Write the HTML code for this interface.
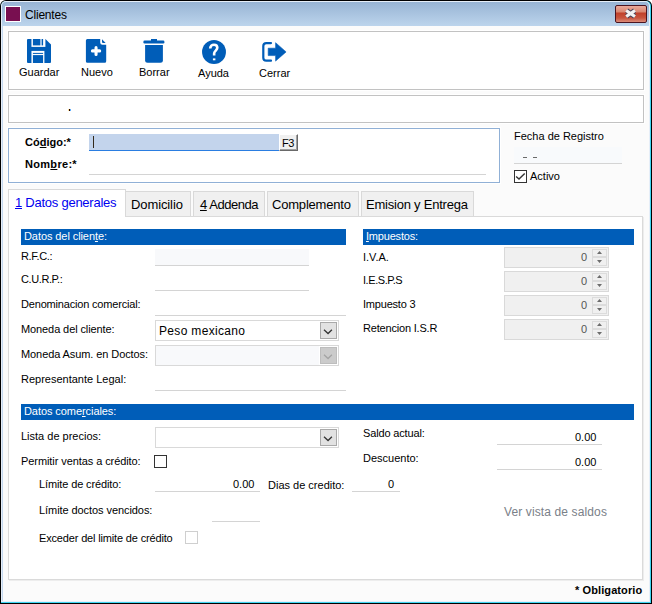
<!DOCTYPE html>
<html><head><meta charset="utf-8">
<style>
html,body{margin:0;padding:0;}
body{width:652px;height:604px;position:relative;overflow:hidden;background:#fff;font-family:"Liberation Sans",sans-serif;}
.a{position:absolute;box-sizing:border-box;}
.t{position:absolute;font-size:11px;line-height:15px;white-space:nowrap;color:#000;}
.t12{font-size:12px;line-height:16px;}
.t13{font-size:13px;line-height:17px;}
.b{font-weight:bold;}
.u{text-decoration:underline;}
.box{position:absolute;box-sizing:border-box;border:1px solid #c2c2c2;background:#fff;box-shadow:0 0 0 1px #fff;}
.ul{position:absolute;height:1px;background:#d4d4d4;}
.tab{position:absolute;box-sizing:border-box;border:1px solid #d9d9d9;border-bottom:none;background:#f0f0f0;}
.hdr{position:absolute;background:#005db8;height:16px;}
.spin{position:absolute;box-sizing:border-box;width:105px;height:21px;border:1px solid #d9d9d9;background:#f0f0f0;}
.sbtn{position:absolute;box-sizing:border-box;left:87px;width:15px;height:9px;border:1px solid #dcdcdc;background:#f0f0f0;}
</style></head><body>

<!-- window frame -->
<div class="a" style="left:0;top:0;width:652px;height:604px;background:#000;border-radius:6px 6px 0 0;"></div>
<div class="a" style="left:1px;top:1px;width:650px;height:602px;background:#3fd6f2;border-radius:5px 5px 0 0;"></div>
<div class="a" style="left:1px;top:1px;width:649px;height:601px;background:#e6eef8;border-radius:5px 5px 0 0;"></div>
<div class="a" style="left:2px;top:2px;width:647px;height:599px;background:linear-gradient(#98b4d4,#bcd4ec 24px,#c4d8ef 24px);border-radius:4px 4px 0 0;"></div>
<div class="a" style="left:3px;top:26px;width:646px;height:575px;background:#fbfbfb;"></div>

<!-- title -->
<div class="a" style="left:5px;top:6px;width:16px;height:16px;background:#fff;"></div>
<div class="a" style="left:6px;top:7px;width:14px;height:14px;background:#780f50;"></div>
<div class="t t12" style="left:25px;top:7px;color:#000;letter-spacing:-0.2px;">Clientes</div>

<!-- close button -->
<div class="a" style="left:615px;top:5px;width:32px;height:18px;border:1px solid #4a1420;border-radius:2px;background:linear-gradient(#eaa99a,#d98670 6px,#c0402a 7px,#c8553e 12px,#dc8c7a);"></div>
<svg class="a" style="left:615px;top:5px" width="32" height="18" viewBox="0 0 32 18">
<path d="M11.6,5.6 L19.6,11.4 M19.6,5.6 L11.6,11.4" stroke="#4a4458" stroke-width="5" stroke-linecap="butt"/>
<path d="M11.2,5.5 L20,11.5 M20,5.5 L11.2,11.5" stroke="#f2f2f2" stroke-width="3.2" stroke-linecap="butt"/>
</svg>

<!-- toolbar box -->
<div class="box" style="left:8px;top:31px;width:636px;height:59px;"></div>
<svg class="a" style="left:27px;top:39px" width="24" height="24" viewBox="0 0 24 24">
<path d="M1,0 H18.4 L24,5.6 V23 Q24,24 23,24 H1 Q0,24 0,23 V1 Q0,0 1,0Z" fill="#005db8"/>
<rect x="4.45" y="0" width="13.95" height="7.9" fill="#fff"/>
<rect x="5.9" y="0" width="7.5" height="6.4" fill="#005db8"/>
<rect x="14.6" y="0" width="1.5" height="6.4" fill="#005db8"/>
<rect x="4.45" y="11.9" width="12.95" height="12.1" fill="#fff"/>
<rect x="5.9" y="13.9" width="10.2" height="1" fill="#005db8"/>
<rect x="5.9" y="16.1" width="10.2" height="7.9" fill="#005db8"/>
</svg>
<svg class="a" style="left:82px;top:36px" width="28" height="30" viewBox="0 0 28 30">
<path d="M5.4,3 H18.2 V6.4 Q18.2,8.7 20.5,8.7 H24.2 V25.3 Q24.2,26.8 22.7,26.8 H5.4 Q3.9,26.8 3.9,25.3 V4.5 Q3.9,3 5.4,3Z" fill="#005db8"/>
<path d="M20,3.3 L23.65,6.9 H21 Q20,6.9 20,5.9Z" fill="#005db8"/>
<path d="M10.45,14.9 H17.65 M14.05,11.65 V18.55" stroke="#fff" stroke-width="3.1" stroke-linecap="round"/>
</svg>
<svg class="a" style="left:140px;top:36px" width="28" height="30" viewBox="0 0 28 30">
<rect x="11" y="3" width="6" height="2.5" fill="#005db8"/>
<rect x="3.4" y="4.5" width="21" height="2.9" rx="1.2" fill="#005db8"/>
<path d="M5.1,8.9 H22.9 V24.3 Q22.9,26.8 20.4,26.8 H7.6 Q5.1,26.8 5.1,24.3Z" fill="#005db8"/>
</svg>
<svg class="a" style="left:202px;top:40px" width="24" height="24" viewBox="0 0 24 24">
<circle cx="12" cy="12" r="11.95" fill="#005db8"/>
<path d="M8.2,8.5 C8.2,6 9.9,4.8 12,4.8 C14,4.8 15.3,6.2 15.3,7.8 C15.3,10.4 12.15,10.9 12.15,13.6 V15.6" stroke="#fff" stroke-width="2.6" fill="none"/>
<rect x="10.9" y="18.4" width="2.5" height="1.9" fill="#fff"/>
</svg>
<svg class="a" style="left:262px;top:40px" width="25" height="24" viewBox="0 0 25 24">
<path d="M9,3.1 H4.3 Q1.3,3.1 1.3,6.1 V17.7 Q1.3,20.7 4.3,20.7 H9" stroke="#005db8" stroke-width="2.2" fill="none" stroke-linecap="round"/>
<path d="M6.2,8.2 H13.6 V2.7 L24.07,11.9 L13.6,21.1 V15.6 H6.2Z" fill="#005db8" stroke="#005db8" stroke-width="0.6" stroke-linejoin="round"/>
</svg>
<div class="t" style="left:19px;top:65px;">Guardar</div>
<div class="t" style="left:81px;top:65px;">Nuevo</div>
<div class="t" style="left:139px;top:65px;">Borrar</div>
<div class="t" style="left:198px;top:66px;">Ayuda</div>
<div class="t" style="left:259px;top:66px;">Cerrar</div>

<!-- box 2 -->
<div class="box" style="left:8px;top:95px;width:636px;height:28px;"></div>
<div class="a" style="left:68px;top:109px;width:1px;height:2px;background:#ffe090;"></div><div class="a" style="left:69px;top:109px;width:1px;height:2px;background:#200000;"></div><div class="a" style="left:70px;top:109px;width:1px;height:2px;background:#60b0ff;"></div>

<!-- codigo/nombre box -->
<div class="box" style="left:8px;top:128px;width:492px;height:55px;border-color:#90b0d6;"></div>
<div class="t b" style="left:25px;top:135px;">C<span>ó</span><span class="u">d</span>igo:*</div>
<div class="t b" style="left:25px;top:157px;letter-spacing:0.3px;">Nom<span class="u">b</span>re:*</div>
<div class="a" style="left:89px;top:134px;width:190px;height:16px;background:#c3d4ec;"></div>
<div class="a" style="left:89px;top:150px;width:190px;height:1px;background:#2a7de1;"></div>
<div class="a" style="left:93px;top:136px;width:1px;height:12px;background:#33291a;"></div>
<div class="a" style="left:279px;top:134px;width:19px;height:17px;background:#f0f0f0;border-left:1px solid #fff;border-top:1px solid #fff;box-shadow:inset -1px -1px 0 #a0a0a0;border-right:1px solid #696969;border-bottom:1px solid #696969;"></div>
<div class="t" style="left:282px;top:136px;letter-spacing:-0.4px;">F3</div>
<div class="ul" style="left:89px;top:174px;width:397px;"></div>

<div class="t" style="left:514px;top:129px;">Fecha de Registro</div>
<div class="a" style="left:514px;top:147px;width:108px;height:16px;background:#f8fafc;"></div>
<div class="ul" style="left:514px;top:163px;width:108px;"></div>
<div class="a" style="left:523px;top:157px;width:4px;height:1px;background:#6a6a6a;"></div><div class="a" style="left:533px;top:157px;width:4px;height:1px;background:#6a6a6a;"></div>
<div class="a" style="left:514px;top:170px;width:13px;height:13px;border:1px solid #333;background:#fff;"></div>
<svg class="a" style="left:514px;top:170px" width="13" height="13" viewBox="0 0 13 13">
<path d="M2.1,6.5 L5,9.1 L10.7,3.4" stroke="#333" stroke-width="1.4" fill="none"/>
</svg>
<div class="t" style="left:530px;top:169px;">Activo</div>

<!-- tabs -->
<div class="box" style="left:8px;top:216px;width:635px;height:364px;border-color:#dadada;box-shadow:1px 1px 0 #ededed;"></div>
<div class="tab" style="left:125px;top:191px;width:66px;height:25px;"></div>
<div class="tab" style="left:193px;top:191px;width:72px;height:25px;"></div>
<div class="tab" style="left:267px;top:191px;width:92px;height:25px;"></div>
<div class="tab" style="left:361px;top:191px;width:113px;height:25px;"></div>
<div class="tab" style="left:8px;top:189px;width:118px;height:28px;background:#fff;"></div>
<div class="t t13" style="left:15px;top:194px;color:#0000f0;letter-spacing:-0.25px;"><span class="u">1</span> Datos generales</div>
<div class="t t13" style="left:131px;top:196px;letter-spacing:-0.1px;">Domicilio</div>
<div class="t t13" style="left:200px;top:196px;letter-spacing:-0.45px;"><span class="u">4</span> Addenda</div>
<div class="t t13" style="left:272px;top:196px;letter-spacing:-0.2px;">Complemento</div>
<div class="t t13" style="left:366px;top:196px;letter-spacing:-0.22px;">Emision y Entrega</div>

<!-- headers -->
<div class="hdr" style="left:21px;top:229px;width:325px;"></div>
<div class="hdr" style="left:363px;top:229px;width:271px;"></div>
<div class="hdr" style="left:21px;top:404px;width:613px;"></div>
<div class="t" style="left:24px;top:229px;color:#fff;letter-spacing:-0.08px;">Datos del clien<span class="u">t</span>e:</div>
<div class="t" style="left:366px;top:229px;color:#fff;letter-spacing:-0.2px;"><span class="u">I</span>mpuestos:</div>
<div class="t" style="left:24px;top:404px;color:#fff;letter-spacing:-0.07px;">Datos come<span class="u">r</span>ciales:</div>

<!-- left column -->
<div class="t" style="left:21px;top:249px;letter-spacing:-0.33px;">R.F.C.:</div>
<div class="t" style="left:21px;top:272px;letter-spacing:-0.4px;">C.U.R.P.:</div>
<div class="t" style="left:21px;top:297px;letter-spacing:-0.18px;">Denominacion comercial:</div>
<div class="t" style="left:21px;top:322px;letter-spacing:-0.1px;">Moneda del cliente:</div>
<div class="t" style="left:21px;top:347px;letter-spacing:-0.09px;">Moneda Asum. en Doctos:</div>
<div class="t" style="left:21px;top:372px;">Representante Legal:</div>

<div class="a" style="left:155px;top:249px;width:154px;height:16px;background:#f8f9fb;"></div>
<div class="ul" style="left:155px;top:265px;width:154px;"></div>
<div class="ul" style="left:155px;top:290px;width:154px;"></div>
<div class="ul" style="left:155px;top:315px;width:191px;"></div>
<div class="a" style="left:155px;top:320px;width:184px;height:21px;border:1px solid #d9d9d9;background:#fff;"></div>
<div class="a" style="left:320px;top:322px;width:17px;height:17px;border:1px solid #a9a9a9;background:#e2e2e2;"></div>
<svg class="a" style="left:320px;top:322px" width="17" height="17" viewBox="0 0 17 17"><path d="M4,7.8 L8.05,11.5 L11.9,7.8" stroke="#333" stroke-width="1.3" fill="none"/></svg>
<div class="t t12" style="left:159px;top:323px;letter-spacing:0.33px;">Peso mexicano</div>
<div class="a" style="left:155px;top:345px;width:184px;height:21px;border:1px solid #d9d9d9;background:#f8f9fb;"></div>
<div class="a" style="left:319px;top:346px;width:19px;height:19px;background:#fff;"></div><div class="a" style="left:320px;top:347px;width:17px;height:17px;background:#cbcbcb;border:1px solid #bdbdbd;"></div>
<svg class="a" style="left:320px;top:347px" width="17" height="17" viewBox="0 0 17 17"><path d="M4,7.8 L8.05,11.5 L11.9,7.8" stroke="#a4a4a4" stroke-width="1.3" fill="none"/></svg>
<div class="ul" style="left:155px;top:390px;width:191px;"></div>

<!-- right column -->
<div class="t" style="left:363px;top:250px;">I.V.A.</div>
<div class="t" style="left:363px;top:273px;letter-spacing:-0.44px;">I.E.S.P.S</div>
<div class="t" style="left:363px;top:297px;letter-spacing:-0.2px;">Impuesto 3</div>
<div class="t" style="left:363px;top:321px;letter-spacing:-0.19px;">Retencion I.S.R</div>

<div class="spin" style="left:504px;top:247px;"><div class="sbtn" style="top:1px;height:8px"></div><div class="sbtn" style="top:9px"></div></div>
<div class="spin" style="left:504px;top:271px;"><div class="sbtn" style="top:1px;height:8px"></div><div class="sbtn" style="top:9px"></div></div>
<div class="spin" style="left:504px;top:295px;"><div class="sbtn" style="top:1px;height:8px"></div><div class="sbtn" style="top:9px"></div></div>
<div class="spin" style="left:504px;top:319px;"><div class="sbtn" style="top:1px;height:8px"></div><div class="sbtn" style="top:9px"></div></div>
<svg class="a" style="left:504px;top:247px" width="105" height="93" viewBox="0 0 105 93">
<g fill="#6d6d6d">
<path d="M93,7 h5 l-2.5,-3z M93,13 h5 l-2.5,3z"/>
<path d="M93,31 h5 l-2.5,-3z M93,37 h5 l-2.5,3z"/>
<path d="M93,55 h5 l-2.5,-3z M93,61 h5 l-2.5,3z"/>
<path d="M93,79 h5 l-2.5,-3z M93,85 h5 l-2.5,3z"/>
</g></svg>
<div class="t" style="left:581px;top:250px;color:#555;">0</div>
<div class="t" style="left:581px;top:274px;color:#555;">0</div>
<div class="t" style="left:581px;top:298px;color:#555;">0</div>
<div class="t" style="left:581px;top:322px;color:#555;">0</div>

<!-- comerciales -->
<div class="t" style="left:21px;top:429px;">Lista de precios:</div>
<div class="a" style="left:155px;top:427px;width:184px;height:21px;border:1px solid #d9d9d9;background:#fff;"></div>
<div class="a" style="left:320px;top:429px;width:17px;height:17px;border:1px solid #a9a9a9;background:#e2e2e2;"></div>
<svg class="a" style="left:320px;top:429px" width="17" height="17" viewBox="0 0 17 17"><path d="M4,7.8 L8.05,11.5 L11.9,7.8" stroke="#333" stroke-width="1.3" fill="none"/></svg>
<div class="t" style="left:21px;top:454px;letter-spacing:-0.08px;">Permitir ventas a crédito:</div>
<div class="a" style="left:154px;top:455px;width:13px;height:13px;border:1px solid #333;background:#fff;"></div>

<div class="t" style="left:39px;top:477px;letter-spacing:-0.12px;">Límite de crédito:</div>
<div class="ul" style="left:155px;top:491px;width:105px;"></div>
<div class="t" style="left:233px;top:477px;">0.00</div>
<div class="t" style="left:268px;top:478px;">Dias de credito:</div>
<div class="ul" style="left:352px;top:491px;width:48px;"></div>
<div class="t" style="left:388px;top:477px;">0</div>
<div class="t" style="left:39px;top:503px;letter-spacing:-0.07px;">Límite doctos vencidos:</div>
<div class="ul" style="left:212px;top:521px;width:48px;"></div>
<div class="t" style="left:39px;top:531px;letter-spacing:-0.16px;">Exceder del limite de crédito</div>
<div class="a" style="left:185px;top:531px;width:13px;height:13px;border:1px solid #cfcfcf;background:#fff;"></div>

<div class="t" style="left:363px;top:426px;letter-spacing:-0.15px;">Saldo actual:</div>
<div class="ul" style="left:497px;top:444px;width:105px;"></div>
<div class="t" style="left:575px;top:430px;">0.00</div>
<div class="t" style="left:363px;top:451px;">Descuento:</div>
<div class="ul" style="left:497px;top:469px;width:105px;"></div>
<div class="t" style="left:575px;top:455px;">0.00</div>

<div class="t t12" style="left:504px;top:504px;color:#7a8088;letter-spacing:0.12px;">Ver vista de saldos</div>

<div class="t b" style="left:575px;top:583px;letter-spacing:0.1px;">* Obligatorio</div>
</body></html>
